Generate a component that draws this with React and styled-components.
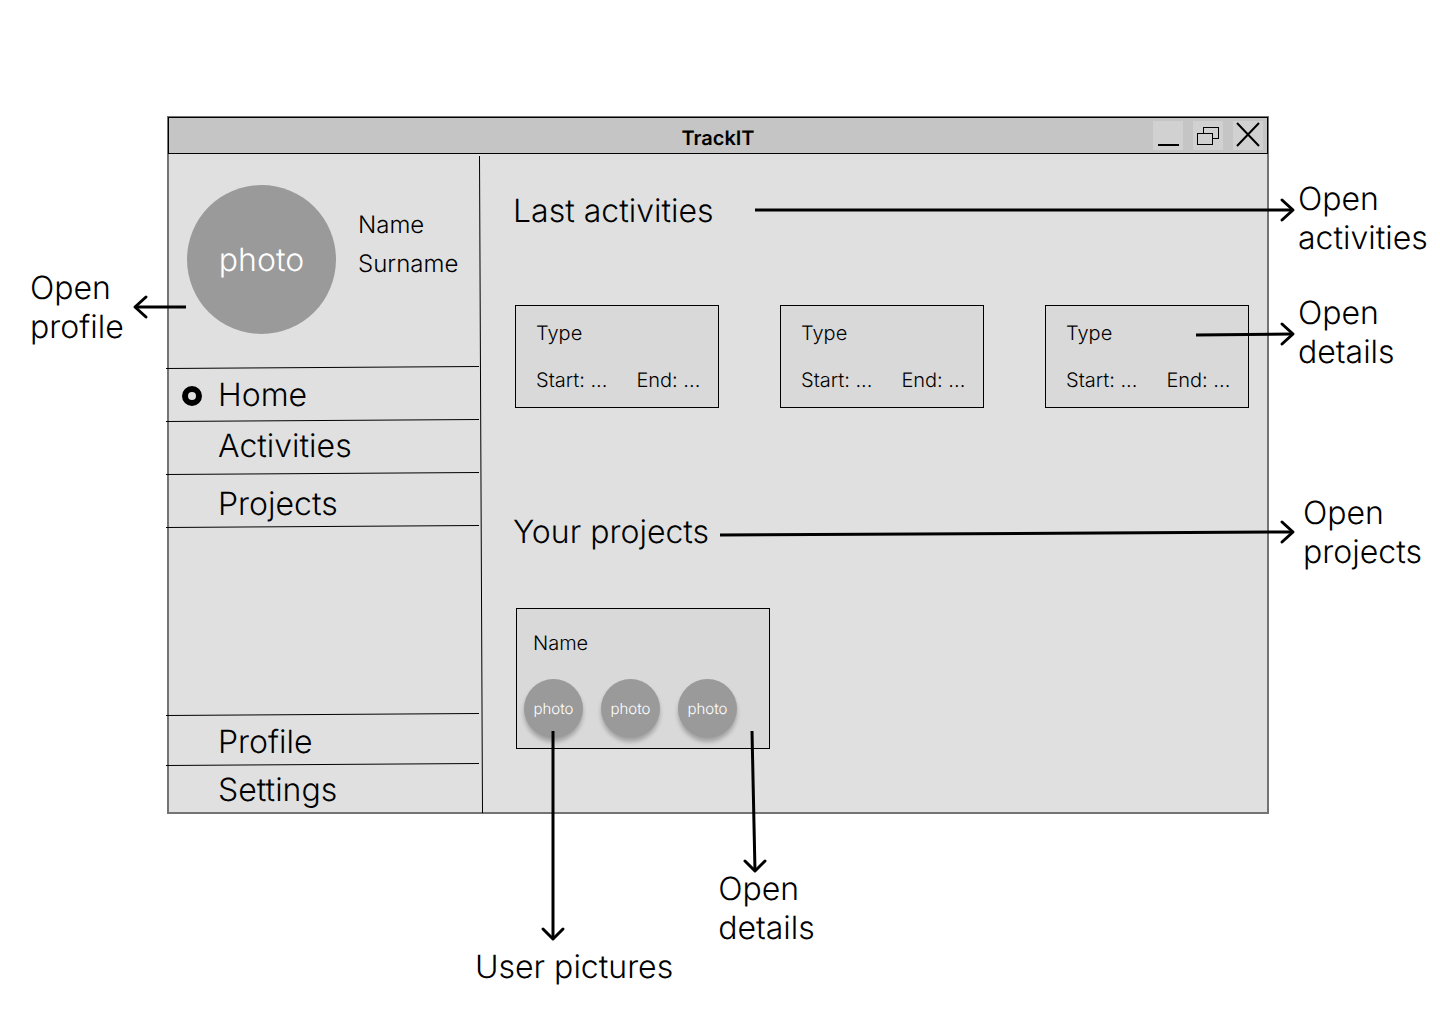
import React from "react";
import styled, { createGlobalStyle } from "styled-components";

const GlobalStyle = createGlobalStyle`
  * { box-sizing: border-box; }
  body {
    margin: 0;
    background: #ffffff;
    color: #000000;
    font-family: Inter, "Liberation Sans", sans-serif;
    font-weight: 300;
    text-rendering: geometricPrecision;
  }
  h1, h2, h3, p { margin: 0; font-weight: 300; }
`;

const Board = styled.div`
  position: relative;
  display: grid;
  grid-template-columns: 167px minmax(0, 1fr) 171px;
  padding: 116px 0 38px;
`;

const LeftNotes = styled.aside`
  padding: 152px 0 0 30px;
`;

const RightNotes = styled.aside`
  display: flex;
  flex-direction: column;
  padding: 63px 0 0 29px;
`;

const BottomNotes = styled.aside`
  grid-column: 2;
  display: flex;
  align-items: flex-end;
  gap: 45px;
  padding: 55px 0 0 308px;
`;

const Note = styled.p`
  font-size: 32px;
  line-height: 39px;
  white-space: pre-line;
  margin-top: ${(p) => p.$above || 0}px;
  padding-left: ${(p) => p.$indent || 0}px;
  padding-bottom: ${(p) => p.$below || 0}px;
`;

const Window = styled.main`
  display: flex;
  flex-direction: column;
  border: 2px solid #747474;
  background: #e0e0e0;
`;

const TitleBar = styled.header`
  display: grid;
  grid-template-columns: 1fr auto 1fr;
  align-items: center;
  height: 37px;
  margin: -1px -1px 0;
  padding-right: 4px;
  border: 1px solid #000000;
  background: #c5c5c5;
`;

const AppTitle = styled.h1`
  grid-column: 2;
  padding: 4px 0 0 4px;
  font-size: 20px;
  line-height: 24px;
  font-weight: 600;
`;

const Controls = styled.div`
  display: flex;
  justify-content: flex-end;
  gap: 10px;
`;

const ControlButton = styled.button`
  width: 30px;
  height: 29px;
  padding: 0;
  border: 0;
  background: #d1d1d1;

  svg { display: block; }
`;

const Columns = styled.div`
  display: flex;
  flex: 1;
`;

const Sidebar = styled.div`
  position: relative;
  display: flex;
  flex-direction: column;
  flex: 0 0 313px;
`;

const Divider = styled.svg`
  position: absolute;
  top: 2px;
  right: 0;
  width: 4px;
  height: calc(100% - 1px);
  overflow: visible;
`;

const Profile = styled.section`
  display: flex;
  gap: 22px;
  height: 214px;
  padding: 31px 0 0 18px;
`;

const Photo = styled.div`
  display: flex;
  flex: none;
  align-items: center;
  justify-content: center;
  width: ${(p) => p.$size}px;
  height: ${(p) => p.$size}px;
  border-radius: 50%;
  background: #9a9a9a;
  color: #ffffff;
  font-size: ${(p) => (p.$small ? 15 : 32)}px;
  box-shadow: ${(p) => (p.$small ? "0 4px 4px rgba(0, 0, 0, 0.25)" : "none")};
`;

const FullName = styled.div`
  padding-top: 20px;
  font-size: 24px;
  line-height: 39px;
`;

const Nav = styled.nav`
  display: flex;
  flex: 1;
  flex-direction: column;
`;

const NavLink = styled.a`
  position: relative;
  display: block;
  height: ${(p) => p.$height}px;
  padding: ${(p) => p.$above}px 0 0 49px;
  color: inherit;
  font-size: 32px;
  line-height: 39px;
  text-decoration: none;
`;

const NavGap = styled.div`
  position: relative;
  flex: 1;
`;

const Rule = styled.svg`
  position: absolute;
  top: -2px;
  left: -3px;
  width: 100%;
  height: 3px;
`;

const CurrentMark = styled.span`
  position: absolute;
  top: 18px;
  left: 13px;
  width: 20px;
  height: 20px;
  border: 6px solid #000000;
  border-radius: 50%;
`;

const Content = styled.div`
  flex: 1;
  padding: 37px 18px 63px 33px;
`;

const Heading = styled.h2`
  margin-left: -2px;
  font-size: 32px;
  line-height: 39px;
`;

const ActivityRow = styled.div`
  display: flex;
  justify-content: space-between;
  margin: 75px 0 104px;
`;

const ActivityCard = styled.article`
  width: 204px;
  height: 103px;
  padding: 15px 0 0 20px;
  border: 1px solid #000000;
  background: #d9d9d9;
  font-size: 20px;
  line-height: 24px;
`;

const ActivityType = styled.h3`
  font-size: 20px;
  line-height: 24px;
`;

const Times = styled.div`
  display: flex;
  gap: 29px;
  margin-top: 23px;
`;

const ProjectCard = styled.article`
  width: 254px;
  height: 141px;
  margin: 57px 0 0 1px;
  padding: 22px 0 0 7px;
  border: 1px solid #000000;
  background: #d9d9d9;
`;

const ProjectName = styled.h3`
  padding-left: 9px;
  font-size: 20px;
  line-height: 24px;
`;

const Members = styled.div`
  display: flex;
  gap: 18px;
  margin-top: 24px;
`;

const ArrowBox = styled.svg`
  position: absolute;
  overflow: visible;
  pointer-events: none;
  stroke: #000000;
  stroke-width: 3px;
  fill: none;
  top: ${(p) => p.$top}px;
  left: ${(p) => (p.$left === undefined ? "auto" : `${p.$left}px`)};
  right: ${(p) => (p.$right === undefined ? "auto" : `${p.$right}px`)};
  width: ${(p) => p.$width};
  height: ${(p) => p.$height}px;
`;

const heads = {
  right: { x: "100%", y: 0, d: "M-11 -10L0 0L-11 10" },
  left: { x: 0, y: 0, d: "M11 -10L0 0L11 10" },
  down: { x: "100%", y: "100%", d: "M-10 -10L0 0L10 -10" },
};

function Arrow({ dir, top, left, right, width, height, rise = 0, lean = 0 }) {
  const head = heads[dir];
  const down = dir === "down";
  return (
    <ArrowBox $top={top} $left={left} $right={right} $width={width} $height={height} aria-hidden="true">
      <line x1={down ? lean : 0} y1={rise} x2="100%" y2={down ? "100%" : 0} />
      <svg x={head.x} y={head.y} overflow="visible">
        <path d={head.d} strokeLinecap="round" strokeLinejoin="round" />
      </svg>
    </ArrowBox>
  );
}

function SlantedRule() {
  return (
    <Rule aria-hidden="true">
      <line x1="0" y1="2.5" x2="100%" y2="0.5" stroke="#000000" />
    </Rule>
  );
}

function NavItem({ label, height, above, current }) {
  return (
    <NavLink href="#" $height={height} $above={above} aria-current={current ? "page" : undefined}>
      <SlantedRule />
      {current && <CurrentMark />}
      {label}
    </NavLink>
  );
}

export default function App() {
  return (
    <>
      <GlobalStyle />
      <Board>
        <LeftNotes>
          <Note>{"Open\nprofile"}</Note>
        </LeftNotes>

        <Window>
          <TitleBar>
            <AppTitle>TrackIT</AppTitle>
            <Controls>
              <ControlButton type="button" aria-label="Minimize">
                <svg width="30" height="29" stroke="#000" strokeWidth="2">
                  <path d="M5 24H26" />
                </svg>
              </ControlButton>
              <ControlButton type="button" aria-label="Restore">
                <svg width="30" height="29" stroke="#000" fill="#d1d1d1">
                  <rect x="10.5" y="6.5" width="15" height="11" />
                  <rect x="4.5" y="12.5" width="15" height="11" />
                </svg>
              </ControlButton>
              <ControlButton type="button" aria-label="Close">
                <svg width="30" height="29" stroke="#000" strokeWidth="2">
                  <path d="M4 2L26 25M26 2L4 25" />
                </svg>
              </ControlButton>
            </Controls>
          </TitleBar>

          <Columns>
            <Sidebar>
              <Profile>
                <Photo $size={149}>photo</Photo>
                <FullName>
                  <p>Name</p>
                  <p>Surname</p>
                </FullName>
              </Profile>
              <Nav>
                <NavItem label="Home" height={53} above={7} current />
                <NavItem label="Activities" height={53} above={5} />
                <NavItem label="Projects" height={53} above={10} />
                <NavGap>
                  <SlantedRule />
                </NavGap>
                <NavItem label="Profile" height={50} above={7} />
                <NavItem label="Settings" height={47} above={5} />
              </Nav>
              <Divider aria-hidden="true">
                <line x1="1.5" y1="0" x2="4.5" y2="100%" stroke="#000000" />
              </Divider>
            </Sidebar>

            <Content>
              <Heading>Last activities</Heading>
              <ActivityRow>
                {[1, 2, 3].map((id) => (
                  <ActivityCard key={id}>
                    <ActivityType>Type</ActivityType>
                    <Times>
                      <span>Start: ...</span>
                      <span>End: ...</span>
                    </Times>
                  </ActivityCard>
                ))}
              </ActivityRow>

              <Heading>Your projects</Heading>
              <ProjectCard>
                <ProjectName>Name</ProjectName>
                <Members>
                  {[1, 2, 3].map((id) => (
                    <Photo key={id} $size={59} $small>photo</Photo>
                  ))}
                </Members>
              </ProjectCard>
            </Content>
          </Columns>
        </Window>

        <RightNotes>
          <Note>{"Open\nactivities"}</Note>
          <Note $above={36}>{"Open\ndetails"}</Note>
          <Note $above={122} $indent={5}>{"Open\nprojects"}</Note>
        </RightNotes>

        <BottomNotes>
          <Note>User pictures</Note>
          <Note $below={39}>{"Open\ndetails"}</Note>
        </BottomNotes>

        <Arrow dir="left" top={307} left={135} width="51px" height={1} />
        <Arrow dir="right" top={210} left={755} right={147} width="calc(100% - 902px)" height={1} />
        <Arrow dir="right" top={334} right={147} width="97px" height={1} rise={1} />
        <Arrow dir="right" top={532} left={720} right={147} width="calc(100% - 867px)" height={3} rise={3} />
        <Arrow dir="down" top={731} left={552} width="1px" height={208} lean={1} />
        <Arrow dir="down" top={731} left={752} width="3px" height={140} />
      </Board>
    </>
  );
}
